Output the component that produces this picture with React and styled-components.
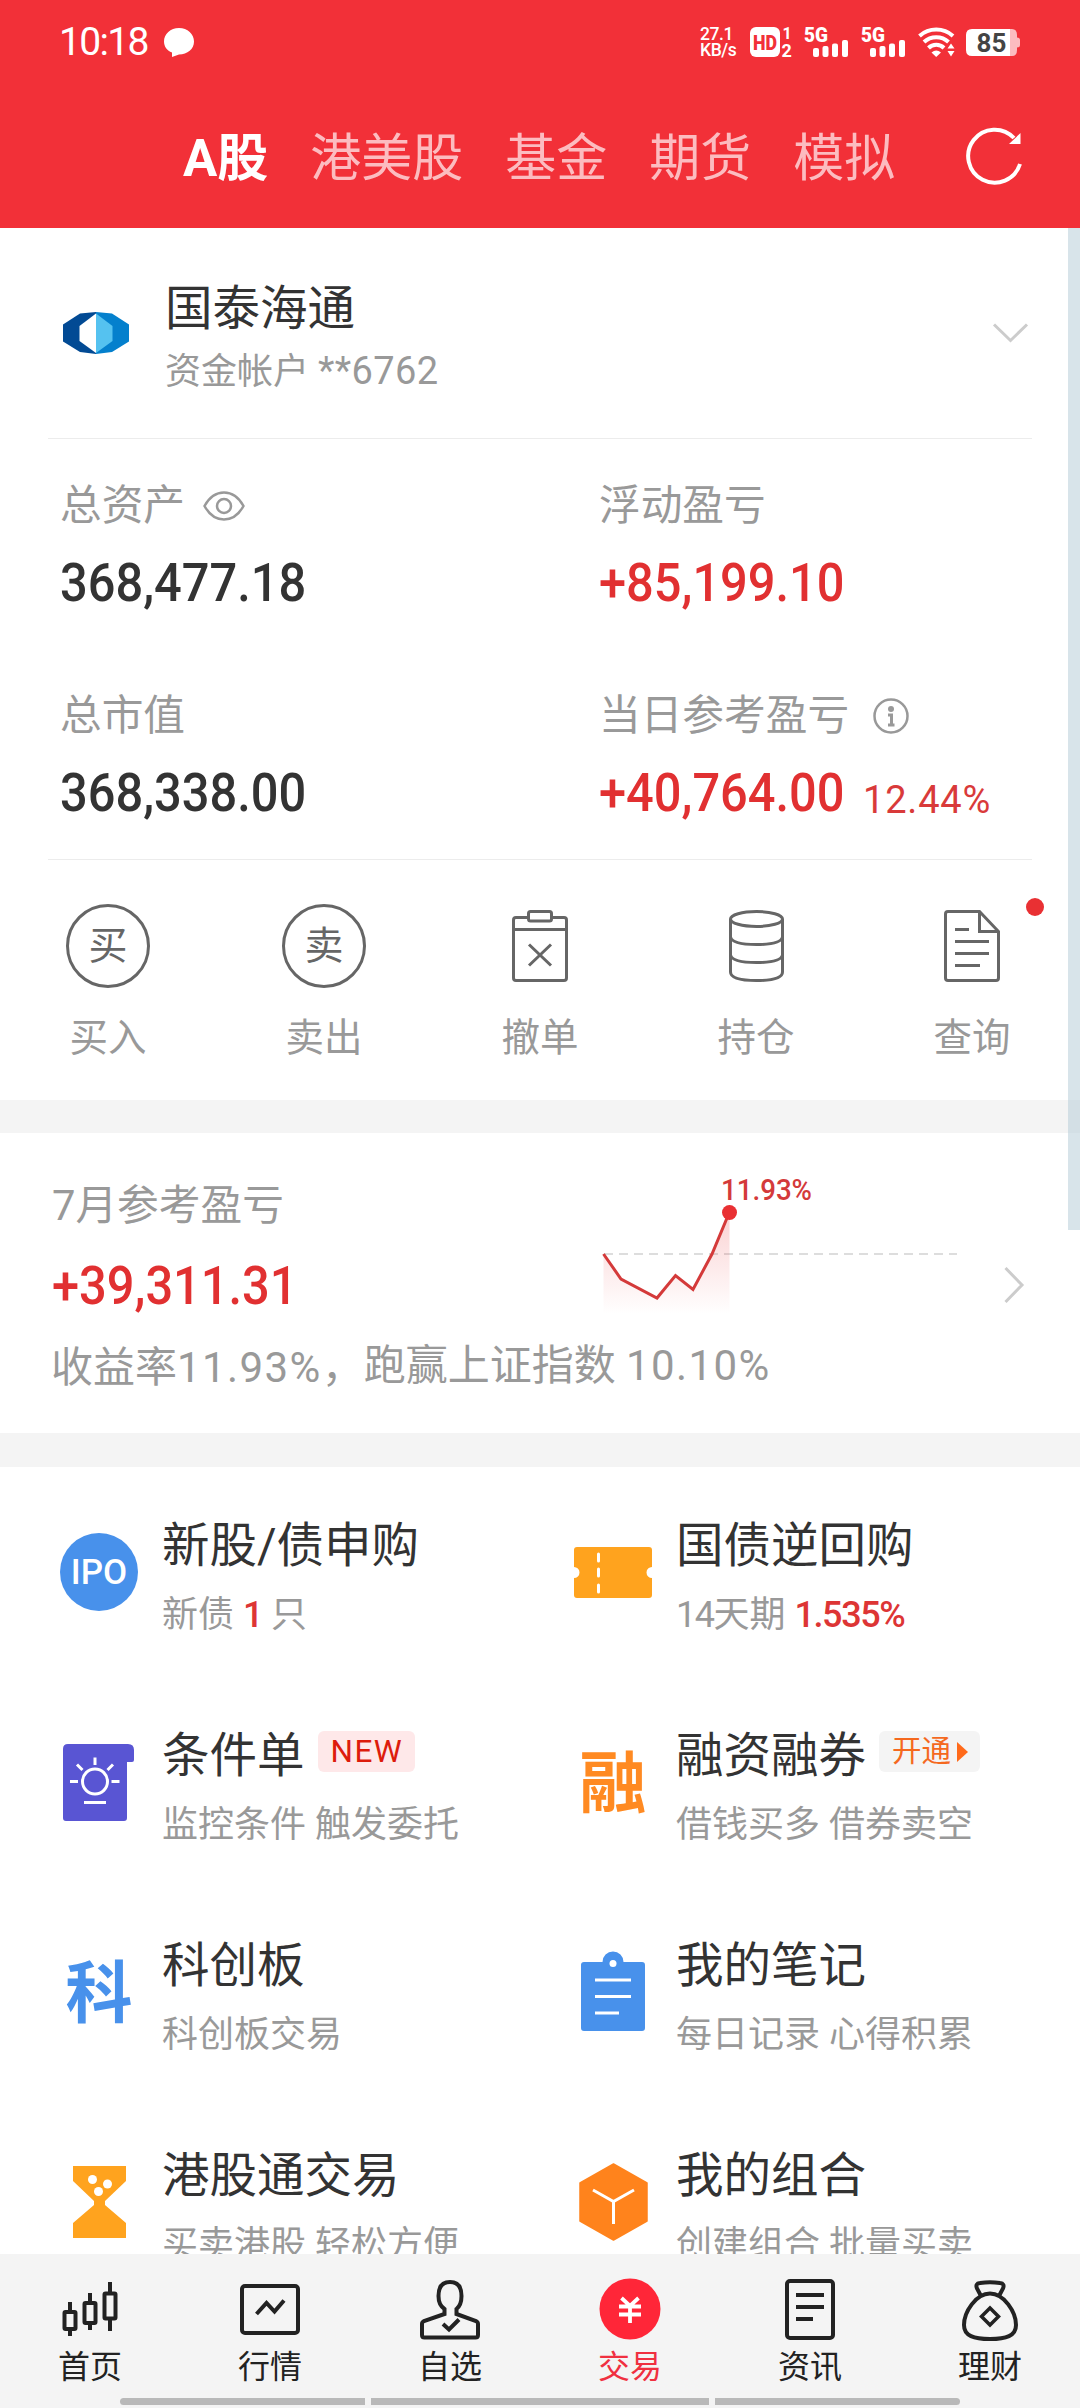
import React from 'react';
import styled, { createGlobalStyle } from 'styled-components';

const GlobalStyle = createGlobalStyle`
  * {
    box-sizing: border-box;
  }

  body {
    margin: 0;
    background: #fff;
    font-family: Roboto, 'Noto Sans CJK SC', sans-serif;
    color: #333;
  }

  svg {
    display: block;
    flex-shrink: 0;
    overflow: visible;
  }
`;

const Screen = styled.div`
  position: relative;
  width: 1080px;
  height: 2408px;
  display: flex;
  flex-direction: column;
  overflow: hidden;
  white-space: nowrap;
`;

const ScrollThumb = styled.div`
  position: absolute;
  top: 228px;
  right: 0;
  width: 12px;
  height: 1002px;
  background: rgba(178, 202, 213, 0.5);
`;

/* ---------- header ---------- */

const Header = styled.header`
  height: 228px;
  flex-shrink: 0;
  background: #f23038;
  color: #fff;
`;

const StatusBar = styled.div`
  height: 84px;
  display: flex;
  align-items: center;
  padding: 0 60px 0 59px;
`;

const Clock = styled.div`
  width: 105px;
  font-size: 39px;
  line-height: 44px;
  letter-spacing: -1.7px;
`;

const StatusIcons = styled.div`
  display: flex;
  align-items: center;
  margin-left: auto;
  height: 30px;
`;

const NetSpeed = styled.div`
  width: 50px;
  font-size: 17.5px;
  font-weight: 500;
  line-height: 16px;
  letter-spacing: -0.4px;
`;

const BadgeBox = styled.div`
  width: 54px;
`;

const SignalBox = styled.div`
  width: 57px;
`;

const WifiBox = styled.div`
  width: 48px;
`;

const Tabs = styled.nav`
  height: 144px;
  display: flex;
  align-items: center;
  gap: 42px;
  padding: 0 56px 0 183px;
`;

const Tab = styled.div`
  height: 66px;
  padding-top: 3px;
  font-size: 51px;
  line-height: 66px;
  font-weight: ${props => (props.$active ? 700 : 400)};
  color: ${props => (props.$active ? '#fff' : '#fcbcc0')};
`;

const RefreshBox = styled.div`
  margin-left: auto;
`;

/* ---------- account card ---------- */

const Account = styled.section`
  height: 210px;
  flex-shrink: 0;
  display: flex;
  align-items: center;
  padding: 0 52px 0 63px;
`;

const AccountText = styled.div`
  flex: 1;
  margin: 16px 0 0 36px;
`;

const Broker = styled.div`
  height: 60px;
  font-size: 47.5px;
  line-height: 60px;
`;

const AccountNo = styled.div`
  height: 64px;
  font-size: 36px;
  line-height: 64px;
  color: #999;

  span {
    font-size: 38px;
    letter-spacing: 0.4px;
  }
`;

const Divider = styled.div`
  height: 1px;
  flex-shrink: 0;
  margin: 0 48px;
  background: #ececec;
`;

const Stats = styled.section`
  height: 420px;
  flex-shrink: 0;
  display: grid;
  grid-template-columns: 539px 480px;
  grid-template-rows: 210px 210px;
  padding-left: 60px;
`;

const Stat = styled.div`
  padding-top: 39px;
`;

const Label = styled.div`
  display: flex;
  align-items: center;
  gap: 18px;
  height: 56px;
  font-size: 41.7px;
  line-height: 56px;
  color: #999;
`;

const ValueRow = styled.div`
  display: flex;
  height: 64px;
  margin-top: 17px;
`;

const Figure = styled.div`
  width: 264px;
  font-size: 54px;
  line-height: 64px;
  font-weight: 500;
  transform: scaleX(0.903);
  transform-origin: 0 50%;
  color: ${props => (props.$up ? '#e13031' : '#333')};
`;

const Percent = styled.div`
  font-size: 38px;
  line-height: 78px;
  letter-spacing: 0.8px;
  color: #d93a3a;
`;

const Actions = styled.section`
  height: 240px;
  flex-shrink: 0;
  display: grid;
  grid-template-columns: repeat(5, 216px);
`;

const Action = styled.div`
  position: relative;
  display: flex;
  flex-direction: column;
  align-items: center;
  padding-top: 44px;
`;

const ActionIcon = styled.div`
  height: 84px;
  display: flex;
  align-items: center;
`;

const ActionCircle = styled.div`
  width: 84px;
  height: 84px;
  border: 3px solid #666;
  border-radius: 50%;
  font-size: 39px;
  line-height: 78px;
  text-align: center;
  color: #666;
`;

const ActionLabel = styled.div`
  height: 52px;
  margin-top: 24px;
  font-size: 38.5px;
  line-height: 52px;
  color: #999;
`;

const RedDot = styled.div`
  position: absolute;
  top: 38px;
  left: 162px;
  width: 18px;
  height: 18px;
  border-radius: 50%;
  background: #e93033;
`;

const Band = styled.div`
  height: ${props => props.$height}px;
  flex-shrink: 0;
  background: #f4f4f4;
`;

/* ---------- monthly profit ---------- */

const Monthly = styled.section`
  height: 300px;
  flex-shrink: 0;
  display: grid;
  grid-template-columns: 550px 1fr 20px;
  padding: 42px 56px 0 52px;
`;

const MonthlyText = styled.div`
  height: 200px;
  padding-top: 3px;
`;

const MonthlyValue = styled.div`
  height: 64px;
  margin-top: 20px;
`;

const Arrow = styled.div`
  padding-top: 92px;
`;

const Summary = styled.div`
  display: flex;
  height: 56px;
  margin: 22px 0 0 -1px;
  font-size: 42px;
  line-height: 56px;
  color: #999;
`;

const SummaryPart = styled.div`
  margin-top: ${props => (props.$raised ? '-2px' : 0)};
`;

const Digits = styled.span`
  letter-spacing: 1.4px;
`;

/* ---------- feature list ---------- */

const Features = styled.section`
  height: 787px;
  flex-shrink: 0;
  display: grid;
  grid-template-columns: 514px 1fr;
  grid-auto-rows: 210px;
  padding-left: 60px;
  overflow: hidden;
`;

const Feature = styled.div`
  display: flex;
  align-items: center;
`;

const FeatureIcon = styled.div`
  width: 78px;
  margin-right: 24px;
  display: flex;
  justify-content: center;
`;

const FeatureBody = styled.div`
  padding-top: 11px;
`;

const FeatureTitle = styled.div`
  display: flex;
  align-items: center;
  height: 62px;
  font-size: 47.5px;
  line-height: 62px;
`;

const FeatureNote = styled.div`
  height: 50px;
  margin-top: 13px;
  font-size: 36px;
  line-height: 50px;
  color: #999;

  b {
    font-weight: 500;
    letter-spacing: -1.4px;
    color: #dd3535;
  }
`;

const Term = styled.span`
  letter-spacing: -1.5px;
`;

const Tag = styled.div`
  display: flex;
  align-items: center;
  gap: 6px;
  height: 41px;
  margin: -9px 0 0 13px;
  padding: 0 12px 0 13px;
  border-radius: 6px;
  font-size: ${props => (props.$hot ? 31.5 : 29.5)}px;
  line-height: 43px;
  letter-spacing: ${props => (props.$hot ? '1.5px' : 0)};
  color: ${props => (props.$hot ? '#dd1c0c' : '#f5691f')};
  background: ${props => (props.$hot ? '#fee8e9' : '#f4f4f4')};
`;

const IpoCircle = styled.div`
  width: 78px;
  height: 78px;
  border-radius: 50%;
  background: #4891eb;
  color: #fff;
  font-size: 35px;
  font-weight: 500;
  line-height: 80px;
  text-align: center;
`;

const GlyphIcon = styled.div`
  height: 78px;
  font-size: 67px;
  line-height: 82px;
  font-weight: 700;
  color: ${props => props.$color};
`;

/* ---------- bottom bar ---------- */

const BottomBar = styled.footer`
  height: 154px;
  flex-shrink: 0;
  background: #f4f4f4;
`;

const NavItems = styled.div`
  display: grid;
  grid-template-columns: repeat(6, 180px);
  height: 144px;
`;

const NavItem = styled.div`
  display: flex;
  flex-direction: column;
  align-items: center;
  padding-top: 24px;
  font-size: 32px;
  line-height: 44px;
  color: ${props => (props.$active ? '#f03040' : '#222')};
`;

const NavIcon = styled.div`
  height: 62px;
  margin-bottom: 5px;
`;

const GestureBar = styled.div`
  display: grid;
  grid-template-columns: 245px 338px 245px;
  gap: 6px;
  width: 840px;
  height: 7px;
  margin: 0 auto;
`;

const GesturePart = styled.div`
  background: #b9b9b9;
  border-radius: ${props => props.$radius};
`;

const HdBadge = () => (
	<svg width="44" height="30" viewBox="0 0 44 30" fontWeight="700">
		<rect width="30" height="30" rx="6" fill="#fff" />
		<text x="3" y="22.500" fontSize="21" fontWeight="900" fill="#f23038" textLength="24" lengthAdjust="spacingAndGlyphs">HD</text>
		<text x="32.500" y="11.500" fontSize="16" fill="#fff">1</text>
		<text x="31.500" y="30" fontSize="18" fill="#fff">2</text>
	</svg>
);

const Signal = () => (
	<svg width="44" height="30" viewBox="0 0 44 30" fill="#fff">
		<text x="0" y="14.500" fontSize="20.500" fontWeight="900" textLength="24" lengthAdjust="spacingAndGlyphs">5G</text>
		<rect x="9" y="21" width="6" height="9" rx="2" />
		<rect x="18.500" y="19" width="6" height="11" rx="2" />
		<rect x="28" y="16.500" width="6" height="13.500" rx="2" />
		<rect x="38" y="13" width="6" height="17" rx="2" />
	</svg>
);

const Wifi = () => (
	<svg width="37" height="30" viewBox="0 0 37 30" fill="none" stroke="#fff" strokeWidth="4">
		<path d="M1.500 9 A25 25 0 0 1 35 9" />
		<path d="M6 15 A18 18 0 0 1 30.500 15" />
		<path d="M10.500 21 A11 11 0 0 1 26 21" />
		<path d="M18.200 30 L13.500 25.500 A7.500 7.500 0 0 1 23 25.500 Z" fill="#fff" stroke="none" />
		<path d="M33 16.500 L36.500 21.500 H29.500 Z M33 29.500 L36.500 24 H29.500 Z" fill="#fff" stroke="none" />
	</svg>
);

const Battery = () => (
	<svg width="54" height="27" viewBox="0 0 54 27">
		<path d="M44 0 H46 Q51 0 51 6 V8.500 Q54 8.500 54 11 V16 Q54 18.500 51 18.500 V21 Q51 27 46 27 H44 Z" fill="#fcbcc0" />
		<path d="M6 0 H44 V27 H6 Q0 27 0 21 V6 Q0 0 6 0 Z" fill="#fff" />
		<text x="10.500" y="23" fontSize="26" fontWeight="700" fill="#444">85</text>
	</svg>
);

const Buy = () => <ActionCircle>买</ActionCircle>;
const Sell = () => <ActionCircle>卖</ActionCircle>;

const CancelOrder = () => (
	<svg width="56" height="72" viewBox="0 0 56 72" fill="none" stroke="#666" strokeWidth="3">
		<path d="M16.500 7.500 H4 Q1.500 7.500 1.500 10 V68 Q1.500 70.500 4 70.500 H52 Q54.500 70.500 54.500 68 V10 Q54.500 7.500 52 7.500 H39.500" />
		<rect x="16.500" y="1.500" width="23" height="9.500" rx="2" />
		<path d="M1.500 19.500 H54.500 M17 34.500 L39 55.500 M39 34.500 L17 55.500" />
	</svg>
);

const Holdings = () => (
	<svg width="55" height="72" viewBox="0 0 55 72" fill="none" stroke="#666" strokeWidth="3">
		<ellipse cx="27.500" cy="9" rx="26" ry="7.500" />
		<path d="M1.500 9 V62 Q1.500 70.500 27.500 70.500 Q53.500 70.500 53.500 62 V9" />
		<path d="M1.500 27 Q3 34.500 27.500 34.500 Q52 34.500 53.500 27 M1.500 45 Q3 52.500 27.500 52.500 Q52 52.500 53.500 45" />
	</svg>
);

const Query = () => (
	<svg width="56" height="72" viewBox="0 0 56 72" fill="none" stroke="#666" strokeWidth="3">
		<path d="M35.500 1.500 H4 Q1.500 1.500 1.500 4 V68 Q1.500 70.500 4 70.500 H52 Q54.500 70.500 54.500 68 V21.500 Z" />
		<path d="M35.500 1.500 V21.500 H54.500 M11 19.500 H25 M11 31.500 H45 M11 43.500 H45 M11 55.500 H36" />
	</svg>
);

const actions = [
	{ name: '买入', Icon: Buy },
	{ name: '卖出', Icon: Sell },
	{ name: '撤单', Icon: CancelOrder },
	{ name: '持仓', Icon: Holdings },
	{ name: '查询', Icon: Query, dot: true },
];

// Daily yield line with the dashed zero axis
const YieldChart = () => (
	<svg width="356" height="150" viewBox="602 1175 356 150">
		<defs>
			<linearGradient id="yieldFill" x1="0" y1="0" x2="0" y2="1">
				<stop offset="0" stopColor="#e93033" stopOpacity="0.22" />
				<stop offset="1" stopColor="#e93033" stopOpacity="0" />
			</linearGradient>
		</defs>
		<path d="M604 1254 H957" stroke="#ddd" strokeWidth="2" strokeDasharray="9 6" />
		<path d="M603.500 1254 L621 1279 L657 1298 L675.500 1275.500 L693 1289.500 L712 1254 L729.500 1212 V1314 H603.500 Z" fill="url(#yieldFill)" />
		<path d="M603.500 1254 L621 1279 L657 1298 L675.500 1275.500 L693 1289.500 L712 1254 L729.500 1212" fill="none" stroke="#d43a3a" strokeWidth="3" />
		<circle cx="729.500" cy="1212.500" r="7.500" fill="#e93033" />
		<text x="721" y="1200" fontSize="29.500" fontWeight="500" fill="#d43a3a" textLength="91" lengthAdjust="spacingAndGlyphs">11.93%</text>
	</svg>
);

const Ipo = () => <IpoCircle>IPO</IpoCircle>;

const Ticket = () => (
	<svg width="78" height="51" viewBox="0 0 78 51">
		<path d="M3 0 H75 Q78 0 78 3 V20 A5.500 5.500 0 0 0 78 31 V48 Q78 51 75 51 H3 Q0 51 0 48 V31 A5.500 5.500 0 0 0 0 20 V3 Q0 0 3 0 Z" fill="#ffa31e" />
		<path d="M24.500 7 V14 M24.500 22 V29 M24.500 38 V45" stroke="#fff" strokeWidth="3" strokeLinecap="round" />
	</svg>
);

const Conditional = () => (
	<svg width="72" height="77" viewBox="0 0 72 77">
		<path d="M5 0 H65 Q71 0 71 6 V16 Q71 18 69 18 H64 V74 Q64 77 61 77 H3 Q0 77 0 74 V5 Q0 0 5 0 Z" fill="#5955d3" />
		<g fill="none" stroke="#fff" strokeWidth="3">
			<circle cx="32" cy="37.500" r="12.500" />
			<path d="M32 13.500 V21 M7 37.500 H15 M48.500 37.500 H56.500 M14 20.500 L19.500 26 M50 20.500 L44.500 26 M21 58.500 H43" />
		</g>
	</svg>
);

const Margin = () => <GlyphIcon $color="#ff8a22">融</GlyphIcon>;
const Star = () => <GlyphIcon $color="#4891eb">科</GlyphIcon>;

const Notes = () => (
	<svg width="64" height="78" viewBox="0 0 64 78">
		<path d="M3 9 H21.500 A10.500 10.500 0 0 1 42.500 9 H61 Q64 9 64 12 V75 Q64 78 61 78 H3 Q0 78 0 75 V12 Q0 9 3 9 Z" fill="#4891eb" />
		<circle cx="32" cy="10.500" r="3.500" fill="#fff" />
		<path d="M14 27 H50 M14 43.500 H50 M14 60 H38" stroke="#fff" strokeWidth="3" />
	</svg>
);

const Hourglass = () => (
	<svg width="53" height="72" viewBox="0 0 53 72">
		<path d="M0 0 H53 V15 L32 35 V39 L53 57 V72 H0 V57 L21 39 V35 L0 15 Z" fill="#ffa31e" />
		<g fill="#fff">
			<circle cx="19.500" cy="13.500" r="4.500" />
			<circle cx="34.500" cy="18" r="4.500" />
			<circle cx="25.500" cy="25.500" r="4.500" />
		</g>
	</svg>
);

const Portfolio = () => (
	<svg width="69" height="78" viewBox="0 0 69 78">
		<path d="M34.500 1 L68 20 V58 L34.500 77 L1 58 V20 Z" fill="#ff831c" stroke="#ff831c" strokeWidth="1.500" strokeLinejoin="round" />
		<path d="M14 27 L34.500 38.500 L55 27 M34.500 38.500 V61" fill="none" stroke="#fff" strokeWidth="3" />
	</svg>
);

const features = [
	{ title: '新股/债申购', note: <>新债 <b>1</b> 只</>, Icon: Ipo },
	{ title: '国债逆回购', note: <><Term>14</Term>天期 <b>1.535%</b></>, Icon: Ticket },
	{ title: '条件单', note: '监控条件 触发委托', Icon: Conditional, tag: <Tag $hot>NEW</Tag> },
	{
		title: '融资融券',
		note: '借钱买多 借券卖空',
		Icon: Margin,
		tag: (
			<Tag>
				开通
				<svg width="11" height="20" viewBox="0 0 11 20"><path d="M0 0 L11 10 L0 20 Z" fill="#ff6a1a" /></svg>
			</Tag>
		),
	},
	{ title: '科创板', note: '科创板交易', Icon: Star },
	{ title: '我的笔记', note: '每日记录 心得积累', Icon: Notes },
	{ title: '港股通交易', note: '买卖港股 轻松方便', Icon: Hourglass },
	{ title: '我的组合', note: '创建组合 批量买卖', Icon: Portfolio },
];

const navProps = { width: 60, height: 62, viewBox: '0 0 60 62', fill: 'none', stroke: '#222', strokeWidth: 4 };

const HomeIcon = () => (
	<svg {...navProps}>
		<rect x="4.500" y="34" width="11" height="17" rx="1" />
		<rect x="24.500" y="25" width="11" height="20" rx="1" />
		<rect x="44.500" y="15.500" width="11" height="25" rx="1" />
		<path d="M10 24 V33 M10 52 V58 M30 15 V24 M30 46 V52 M50 4 V14 M50 42 V53" />
	</svg>
);

const QuotesIcon = () => (
	<svg {...navProps}>
		<rect x="2" y="8" width="56" height="47" rx="3" />
		<path d="M16.500 36 L26.500 25 L34.500 33.500 L44 22.500" />
	</svg>
);

const WatchIcon = () => (
	<svg {...navProps}>
		<path d="M24.500 36 V31 Q18.500 27 18.500 18 Q18.500 4 30 4 Q41.500 4 41.500 18 Q41.500 27 36.500 31 V36 L56 43 Q58 44 58 46 V57 Q58 59.500 55.500 59.500 H4.500 Q2 59.500 2 57 V46 Q2 44 4 43 Z" />
		<path d="M23 46 L29 51.500 L39 41.500" />
	</svg>
);

const TradeIcon = () => (
	<svg {...navProps}>
		<circle cx="30" cy="31" r="30.500" fill="#ff2638" stroke="none" />
		<path d="M21.500 20 L30 28 L38.500 20 M19 28.500 H41 M19 36.500 H41 M30 27 V45" stroke="#fff" strokeWidth="3.800" />
	</svg>
);

const NewsIcon = () => (
	<svg {...navProps}>
		<rect x="7" y="3" width="46" height="57" rx="3" />
		<path d="M16 17 H44 M16 29 H44 M16 41 H33" />
	</svg>
);

const WealthIcon = () => (
	<svg {...navProps}>
		<path d="M21 18 L17 10.500 Q15 5.500 20 5 Q30 3.500 40 5 Q45 5.500 43 10.500 L39 18" />
		<path d="M30 15.500 C16 15.500 4 34 4 47 C4 58 14 61 30 61 C46 61 56 58 56 47 C56 34 44 15.500 30 15.500 Z" />
		<path d="M30 30 L38.500 38.500 L30 47 L21.500 38.500 Z" strokeWidth="3.500" />
	</svg>
);

const navItems = [
	{ name: '首页', Icon: HomeIcon },
	{ name: '行情', Icon: QuotesIcon },
	{ name: '自选', Icon: WatchIcon },
	{ name: '交易', Icon: TradeIcon },
	{ name: '资讯', Icon: NewsIcon },
	{ name: '理财', Icon: WealthIcon },
];

const tabs = [ 'A股', '港美股', '基金', '期货', '模拟' ];

function App() {
	return (
		<Screen>
			<GlobalStyle />
			<Header>
				<StatusBar>
					<Clock>10:18</Clock>
					<svg width="30" height="29" viewBox="0 0 30 29">
						<path d="M15 0 C23.500 0 30 6 30 13.500 C30 21 23.500 26.500 15 26.500 L8 29 V24.500 C3 22.500 0 18.500 0 13.500 C0 6 6.500 0 15 0 Z" fill="#fff" />
					</svg>
					<StatusIcons>
						<NetSpeed>27.1<br />KB/s</NetSpeed>
						<BadgeBox><HdBadge /></BadgeBox>
						<SignalBox><Signal /></SignalBox>
						<SignalBox><Signal /></SignalBox>
						<WifiBox><Wifi /></WifiBox>
						<Battery />
					</StatusIcons>
				</StatusBar>
				<Tabs>
					{ tabs.map( ( tab, i ) => <Tab key={ tab } $active={ i === 0 }>{ tab }</Tab> ) }
					<RefreshBox>
						<svg width="57" height="58" viewBox="0 0 57 58" fill="none" stroke="#fff" strokeWidth="4">
							<path d="M53 37 A26.500 26.500 0 1 1 47 11" />
							<path d="M53.500 6 V17 H42 Z" fill="#fff" stroke="none" />
						</svg>
					</RefreshBox>
				</Tabs>
			</Header>

			<Account>
				<svg width="66" height="42" viewBox="0 0 66 42">
					<path d="M33 0 L17 1.500 L0 12.500 V29.500 L17 40 L33 42 Z" fill="#024a94" />
					<path d="M33 0 L49 1.500 L66 12.500 V29.500 L49 40 L33 42 Z" fill="#0480cd" />
					<path d="M33 1.500 L16.500 14 V29 L33 41 Z" fill="#fff" />
					<path d="M33 1.500 L49.500 14 V29 L33 41 Z" fill="#55c2f0" />
				</svg>
				<AccountText>
					<Broker>国泰海通</Broker>
					<AccountNo>资金帐户 <span>**6762</span></AccountNo>
				</AccountText>
				<svg width="35" height="20" viewBox="0 0 35 20" fill="none" stroke="#ccc" strokeWidth="3">
					<path d="M1 1.500 L17.500 17.500 L34 1.500" />
				</svg>
			</Account>
			<Divider />

			<Stats>
				<Stat>
					<Label>
						总资产
						<svg width="42" height="30" viewBox="0 0 42 30" fill="none" stroke="#999" strokeWidth="2.500">
							<path d="M1.500 15 Q9 1.500 21 1.500 Q33 1.500 40.500 15 Q33 28.500 21 28.500 Q9 28.500 1.500 15 Z" />
							<circle cx="21" cy="15" r="7" />
						</svg>
					</Label>
					<ValueRow><Figure>368,477.18</Figure></ValueRow>
				</Stat>
				<Stat>
					<Label>浮动盈亏</Label>
					<ValueRow><Figure $up>+85,199.10</Figure></ValueRow>
				</Stat>
				<Stat>
					<Label>总市值</Label>
					<ValueRow><Figure>368,338.00</Figure></ValueRow>
				</Stat>
				<Stat>
					<Label>
						当日参考盈亏
						<svg width="48" height="36" viewBox="-6 0 48 36" fill="none" stroke="#999" strokeWidth="2.500">
							<circle cx="18" cy="18" r="16.500" />
							<path d="M15 17 H18.500 V27 M15 27 H21.500" strokeWidth="3" />
							<circle cx="18" cy="11" r="3" fill="#999" stroke="none" />
						</svg>
					</Label>
					<ValueRow>
						<Figure $up>+40,764.00</Figure>
						<Percent>12.44%</Percent>
					</ValueRow>
				</Stat>
			</Stats>
			<Divider />

			<Actions>
				{ actions.map( ( { name, Icon, dot } ) => (
					<Action key={ name }>
						<ActionIcon><Icon /></ActionIcon>
						<ActionLabel>{ name }</ActionLabel>
						{ dot && <RedDot /> }
					</Action>
				) ) }
			</Actions>
			<Band $height={ 33 } />

			<Monthly>
				<MonthlyText>
					<Label>7月参考盈亏</Label>
					<MonthlyValue><Figure $up>+39,311.31</Figure></MonthlyValue>
					<Summary>
						<SummaryPart>收益率<Digits>11.93%</Digits>，</SummaryPart>
						<SummaryPart $raised>跑赢上证指数 <Digits>10.10%</Digits></SummaryPart>
					</Summary>
				</MonthlyText>
				<YieldChart />
				<Arrow>
					<svg width="20" height="36" viewBox="0 0 20 36" fill="none" stroke="#ccc" strokeWidth="3">
						<path d="M1.500 1 L18 18 L1.500 35" />
					</svg>
				</Arrow>
			</Monthly>
			<Band $height={ 34 } />

			<Features>
				{ features.map( ( { title, note, Icon, tag } ) => (
					<Feature key={ title }>
						<FeatureIcon><Icon /></FeatureIcon>
						<FeatureBody>
							<FeatureTitle>{ title }{ tag }</FeatureTitle>
							<FeatureNote>{ note }</FeatureNote>
						</FeatureBody>
					</Feature>
				) ) }
			</Features>

			<BottomBar>
				<NavItems>
					{ navItems.map( ( { name, Icon } ) => (
						<NavItem key={ name } $active={ name === '交易' }>
							<NavIcon><Icon /></NavIcon>
							{ name }
						</NavItem>
					) ) }
				</NavItems>
				<GestureBar>
					<GesturePart $radius="4px 0 0 4px" />
					<GesturePart $radius="0" />
					<GesturePart $radius="0 4px 4px 0" />
				</GestureBar>
			</BottomBar>
			<ScrollThumb />
		</Screen>
	);
}

export default App;
